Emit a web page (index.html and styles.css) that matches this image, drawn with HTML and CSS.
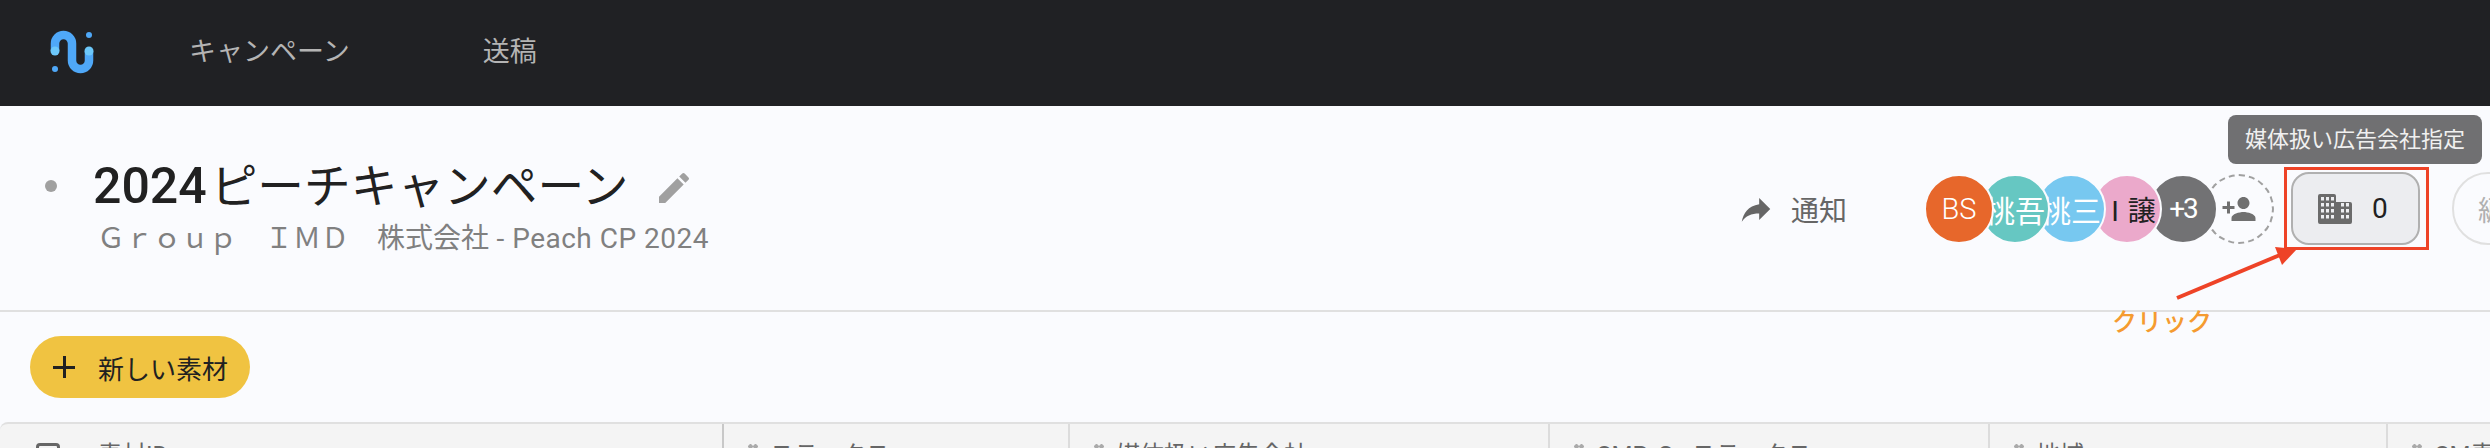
FILE: index.html
```html
<!DOCTYPE html>
<html lang="ja">
  <head>
    <meta charset="UTF-8" />
    <title>2024ピーチキャンペーン</title>
    <link rel="stylesheet" href="styles.css">
  </head>
  <body>
    <nav class="topbar">
      <svg class="logo" width="60" height="60" viewBox="0 0 60 60">
        <path d="M9 25V17.5a8.5 8.5 0 0 1 17 0V34.5a8.5 8.5 0 0 0 17 0V25" fill="none" stroke="#4fa8f8" stroke-width="8.5" />
        <circle cx="9" cy="25" r="4.500" fill="#6cc8fb" />
        <circle cx="43" cy="25" r="4.500" fill="#6cc8fb" />
        <circle cx="43" cy="9" r="3" fill="#4fa8f8" />
        <circle cx="9" cy="43" r="3" fill="#4fa8f8" />
      </svg>
      <a class="nav-link nav-campaign">キャンペーン</a>
      <a class="nav-link">送稿</a>
    </nav>

    <header class="campaign-head">
      <span class="status-dot"></span>
      <div class="campaign-title">
        <div class="title-row">
          <h1><span class="year">2024</span>ピーチキャンペーン</h1>
          <svg class="pencil" width="40" height="40" viewBox="0 0 24 24" fill="#a0a0a0">
            <path d="M3 17.25V21h3.75L17.81 9.94l-3.75-3.75L3 17.25zM20.71 7.04a1 1 0 0 0 0-1.41l-2.34-2.34a1 1 0 0 0-1.41 0l-1.83 1.83 3.75 3.75 1.83-1.83z" />
          </svg>
        </div>
        <p class="subtitle">Ｇｒｏｕｐ　ＩＭＤ　株式会社<span class="sub-latin"> - Peach CP 2024</span></p>
      </div>

      <div class="head-actions">
        <a class="notify">
          <svg width="38" height="38" viewBox="0 0 24 24" fill="#666">
            <path d="M14 9V5l7 7-7 7v-4.100c-5 0-8.500 1.600-11 5.100 1-5 4-10 11-11z" />
          </svg>
          通知
        </a>
        <div class="avatars">
          <span class="avatar orange">BS</span>
          <span class="avatar teal">桃吾</span>
          <span class="avatar blue">桃三</span>
          <span class="avatar pink">I 譲</span>
          <span class="avatar grey">+3</span>
          <span class="avatar add">
            <svg width="36" height="36" viewBox="0 0 24 24" fill="#707070">
              <path d="M15 12c2.210 0 4-1.790 4-4s-1.790-4-4-4-4 1.790-4 4 1.790 4 4 4zm-9-2V7H4v3H1v2h3v3h2v-3h3v-2H6zm9 4c-2.670 0-8 1.340-8 4v2h16v-2c0-2.660-5.330-4-8-4z" />
            </svg>
          </span>
        </div>
        <button class="agency-btn">
          <svg width="34" height="30" viewBox="0 0 34 30">
            <defs>
              <pattern id="windows" width="5" height="6" patternUnits="userSpaceOnUse" x="3" y="3">
                <rect width="3" height="3.500" fill="#ecedf0" />
              </pattern>
            </defs>
            <path d="M2 0h14a2 2 0 0 1 2 2v6h14a2 2 0 0 1 2 2v18a2 2 0 0 1-2 2H2a2 2 0 0 1-2-2V2a2 2 0 0 1 2-2z" fill="#6b6b6b" />
            <rect x="3" y="3" width="13" height="24" fill="url(#windows)" />
            <rect x="23" y="9" width="8" height="18" fill="url(#windows)" />
          </svg>
          <span>0</span>
        </button>
        <button class="next-btn">編集</button>
      </div>

      <div class="tooltip">媒体扱い広告会社指定</div>
      <div class="callout-box"></div>
      <svg class="callout-arrow" width="140" height="70" viewBox="0 0 140 70">
        <path d="M17 55L120 12" stroke="#ee4327" stroke-width="4" fill="none" />
        <path d="M137 6L115 4L122 22Z" fill="#ee4327" />
      </svg>
      <span class="callout-text">クリック</span>
    </header>

    <section class="toolbar">
      <button class="new-btn"><span class="plus"></span>新しい素材</button>
    </section>

    <div class="table-head">
      <div class="col col-id"><span class="checkbox"></span>素材ID</div>
      <div class="col col-status"><span class="grip"></span>ステータス</div>
      <div class="col col-agency"><span class="grip"></span>媒体扱い広告会社</div>
      <div class="col col-cmp"><span class="grip"></span>CMP_S ステータス</div>
      <div class="col col-area"><span class="grip"></span>地域</div>
      <div class="col col-last"><span class="grip"></span>CM素材</div>
    </div>
  </body>
</html>
```

FILE: styles.css
```css
* {
  box-sizing: border-box;
}
html,
body {
  height: 448px;
  overflow: hidden;
}
body {
  margin: 0;
  background-color: #fafbfe;
  font-family: Roboto, "Noto Sans CJK JP", sans-serif;
  color: #212121;
}
.topbar {
  height: 106px;
  background-color: #202124;
  display: flex;
  align-items: center;
  padding-left: 46px;
}
.logo {
  margin: 6px 83px 0 0;
}
.nav-link {
  margin-bottom: 7px;
  font-size: 27px;
  color: #b4b4b4;
}
.nav-campaign {
  margin-right: 133px;
}
.campaign-head {
  position: relative;
  height: 206px;
  border-bottom: 2px solid #e0e0e0;
  display: flex;
  padding: 52px 0 0 45px;
}
.status-dot {
  flex: none;
  width: 12px;
  height: 12px;
  border-radius: 50%;
  background: #a0a0a0;
  margin: 22px 36px 0 0;
}
.title-row {
  display: flex;
  align-items: center;
  gap: 25px;
  height: 56px;
}
h1 {
  margin: 0;
  font-size: 46.7px;
  font-weight: 400;
  line-height: 56px;
  white-space: nowrap;
}
.year {
  margin-right: 4px;
  font-size: 50px;
  font-weight: 500;
}
.pencil {
  margin-top: 3px;
}
.subtitle {
  margin: 7px 0 0 4px;
  font-size: 28px;
  line-height: 36px;
  color: #808080;
  white-space: nowrap;
}
.sub-latin {
  letter-spacing: 0.5px;
}
.head-actions {
  flex: none;
  width: 753px;
  margin: 14px 0 0 auto;
  display: flex;
  align-items: center;
  height: 73px;
}
.notify {
  flex: none;
  display: flex;
  align-items: center;
  gap: 16px;
  font-size: 28px;
  color: #666;
  width: 187px;
}
.avatars {
  flex: none;
  display: flex;
  align-items: center;
  width: 367px;
}
.avatar {
  flex: none;
  width: 70px;
  height: 70px;
  margin-right: -14px;
  border: 2px solid #fafbfe;
  border-radius: 50%;
  display: flex;
  align-items: center;
  justify-content: center;
  overflow: hidden;
  white-space: nowrap;
  font-size: 30px;
  color: #fff;
}
.orange {
  background: #e7672b;
  font-size: 29px;
  font-weight: 300;
  z-index: 5;
}
.teal {
  background: #66c7c2;
  z-index: 4;
}
.blue {
  background: #77c8f0;
  z-index: 3;
}
.pink {
  padding-left: 14px;
  background: #eba9cb;
  color: #212121;
  font-size: 28px;
  letter-spacing: 1px;
  z-index: 2;
}
.grey {
  background: #727274;
  font-size: 28px;
  letter-spacing: -2px;
  z-index: 1;
}
.add {
  border: 2px dashed #a0a0a0;
  background: #fafbfe;
}
.agency-btn {
  flex: none;
  width: 129px;
  height: 73px;
  display: flex;
  align-items: center;
  gap: 20px;
  padding: 0 0 0 25px;
  background: #ecedf0;
  border: 2px solid #b0b0b0;
  border-radius: 18px;
  font-family: inherit;
  font-size: 28px;
  color: #212121;
}
.next-btn {
  width: 120px;
  height: 73px;
  flex: none;
  margin-left: 32px;
  padding: 0 0 0 24px;
  text-align: left;
  background: none;
  border: 2px solid #e0e0e0;
  border-radius: 36px;
  font-family: inherit;
  font-size: 28px;
  color: #b0b0b0;
  white-space: nowrap;
}
.tooltip {
  position: absolute;
  top: 9px;
  left: 2228px;
  width: 254px;
  height: 49px;
  background: #707072;
  border-radius: 8px;
  font-size: 22px;
  line-height: 49px;
  text-align: center;
  color: #f0f0f0;
}
.callout-box {
  position: absolute;
  top: 61px;
  left: 2284px;
  width: 145px;
  height: 83px;
  border: 3px solid #ee4327;
}
.callout-arrow {
  position: absolute;
  top: 137px;
  left: 2160px;
}
.callout-text {
  position: absolute;
  top: 201px;
  left: 2112px;
  font-size: 25px;
  font-weight: 500;
  line-height: 32px;
  color: #f59b30;
}
.toolbar {
  height: 110px;
  padding: 24px 0 0 30px;
}
.new-btn {
  width: 220px;
  height: 62px;
  display: flex;
  align-items: center;
  gap: 23px;
  padding: 0 0 0 23px;
  background: #f0c341;
  border: none;
  border-radius: 31px;
  font-family: inherit;
  font-size: 26px;
  color: #212121;
}
.plus {
  width: 22px;
  height: 22px;
  background: linear-gradient(#212121, #212121) center / 100% 3px no-repeat,
    linear-gradient(#212121, #212121) center / 3px 100% no-repeat;
}
.table-head {
  display: flex;
  height: 60px;
  background: #f4f4f4;
  border-top: 2px solid #e0e0e0;
  border-radius: 8px 0 0 0;
  font-size: 24px;
  line-height: 36px;
  color: #666;
}
.col {
  flex: none;
  display: flex;
  padding: 13px 0 0 24px;
  border-right: 2px solid #dcdcdc;
  white-space: pre;
}
.col-id {
  width: 724px;
  padding-left: 36px;
  gap: 38px;
  border-right-color: #c8c8c8;
}
.col-status {
  width: 346px;
}
.col-agency {
  width: 480px;
}
.col-cmp {
  width: 440px;
  word-spacing: 13px;
}
.col-area {
  width: 398px;
}
.col-last {
  border-right: none;
}
.checkbox {
  width: 24px;
  height: 24px;
  margin-top: 6px;
  border: 3px solid #666;
  border-radius: 4px;
}
.grip {
  width: 10px;
  height: 16px;
  margin: 7px 12px 0 0;
  background: radial-gradient(circle, #aaa 2px, transparent 2.500px) 0 0 / 5px 5px;
}
```
